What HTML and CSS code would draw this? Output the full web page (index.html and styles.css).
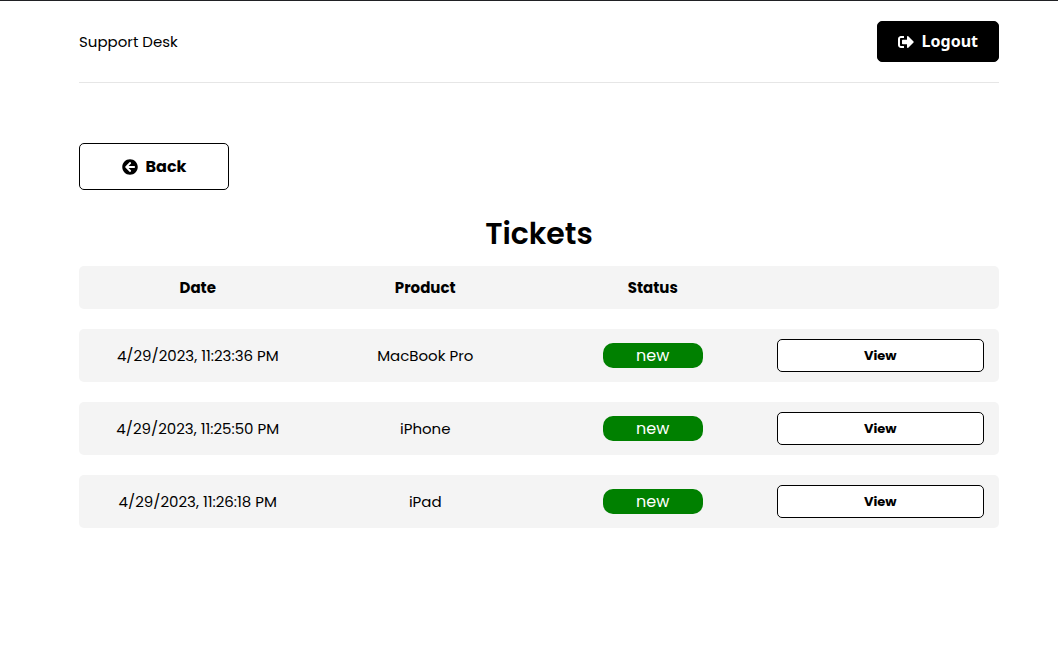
FILE: index.html
```html
<!DOCTYPE html>
<html lang="en">
<head>
  <meta charset="utf-8">
  <meta name="viewport" content="width=device-width, initial-scale=1">
  <title>Support Desk</title>
  <link rel="stylesheet" href="styles.css">
</head>
<body>
  <div class="container">
    <header class="header">
      <a class="brand" href="#">Support Desk</a>
      <button class="btn btn-logout" type="button">
        <svg class="icon" viewBox="0 0 512 512" aria-hidden="true"><path fill="currentColor" d="M497 273L329 441c-15 15-41 4.500-41-17v-96H152c-13.300 0-24-10.700-24-24v-96c0-13.300 10.700-24 24-24h136V88c0-21.400 25.900-32 41-17l168 168c9.300 9.400 9.300 24.600 0 34zM192 436v-40c0-6.600-5.400-12-12-12H96c-17.700 0-32-14.300-32-32V160c0-17.700 14.300-32 32-32h84c6.600 0 12-5.400 12-12V76c0-6.600-5.400-12-12-12H96c-53 0-96 43-96 96v192c0 53 43 96 96 96h84c6.600 0 12-5.400 12-12z"/></svg>
        <span>Logout</span>
      </button>
    </header>
    <main>
      <a class="btn btn-back" href="#">
        <svg class="icon" viewBox="0 0 512 512" aria-hidden="true"><path fill="currentColor" d="M256 504C119 504 8 393 8 256S119 8 256 8s248 111 248 248-111 248-248 248zm28.900-143.600L209.400 288H392c13.300 0 24-10.700 24-24v-16c0-13.300-10.700-24-24-24H209.400l75.500-72.400c9.700-9.300 9.900-24.800.4-34.300l-11-10.900c-9.400-9.400-24.600-9.400-33.900 0L107.700 239c-9.400 9.400-9.400 24.600 0 33.900l132.700 132.700c9.400 9.400 24.600 9.400 33.900 0l11-10.900c9.500-9.500 9.300-25-.4-34.300z"/></svg>
        <span>Back</span>
      </a>
      <h1 class="title">Tickets</h1>
      <table class="tickets">
        <thead>
          <tr class="row row-head"><th>Date</th><th>Product</th><th>Status</th><td></td></tr>
        </thead>
        <tbody>
          <tr class="row"><td>4/29/2023, 11:23:36 PM</td><td>MacBook Pro</td><td><span class="status">new</span></td><td><a class="btn btn-view" href="#">View</a></td></tr>
          <tr class="row"><td>4/29/2023, 11:25:50 PM</td><td>iPhone</td><td><span class="status">new</span></td><td><a class="btn btn-view" href="#">View</a></td></tr>
          <tr class="row"><td>4/29/2023, 11:26:18 PM</td><td>iPad</td><td><span class="status">new</span></td><td><a class="btn btn-view" href="#">View</a></td></tr>
        </tbody>
      </table>
    </main>
  </div>
</body>
</html>
```

FILE: styles.css
```css
* {
  box-sizing: border-box;
  margin: 0;
  padding: 0;
}

body {
  padding-left: 20px;
  border-top: 1px solid #202124;
  background: #fff;
  color: #000;
  font: 15px/23px Poppins, Inter, sans-serif;
}

.container {
  max-width: 960px;
  margin: 0 auto;
  padding: 0 20px;
}

.header {
  display: flex;
  justify-content: space-between;
  align-items: center;
  padding: 20px 0;
  margin-bottom: 60px;
  border-bottom: 1px solid #e6e6e6;
}

.brand {
  color: inherit;
  text-decoration: none;
}

.btn {
  display: flex;
  align-items: center;
  justify-content: center;
  gap: 8px;
  border: 1px solid #000;
  border-radius: 5px;
  background: #fff;
  color: #000;
  font-size: 16px;
  font-weight: 700;
  text-decoration: none;
  cursor: pointer;
}

.icon {
  width: 16px;
  height: 16px;
}

.btn-logout {
  padding: 8px 20px;
  background: #000;
  color: #fff;
  font-family: "Noto Sans", sans-serif;
  line-height: 23px;
}

.btn-back {
  width: 150px;
  padding: 11px 20px;
  margin-bottom: 20px;
}

.title {
  margin-bottom: 8px;
  font-size: 30px;
  font-weight: 600;
  line-height: 48px;
  text-align: center;
}

.tickets,
.tickets thead,
.tickets tbody {
  display: block;
}

.row {
  display: grid;
  grid-template-columns: repeat(4, 1fr);
  gap: 20px;
  align-items: center;
  padding: 10px 15px;
  margin-bottom: 20px;
  border-radius: 5px;
  background: #f4f4f4;
  text-align: center;
}

.row-head {
  font-weight: 700;
}

.status {
  display: block;
  width: 100px;
  margin: 0 auto;
  border-radius: 10px;
  background: #008000;
  color: #fff;
  font-size: 16px;
  line-height: 25px;
}

.btn-view {
  padding: 4px 15px;
  font-size: 13px;
}
```
